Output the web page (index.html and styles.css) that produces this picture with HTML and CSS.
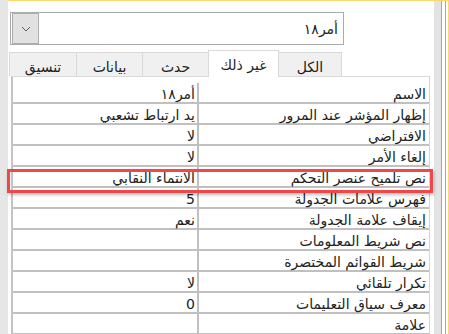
FILE: index.html
```html
<!DOCTYPE html>
<html lang="ar">
<head>
    <meta charset="UTF-8">
    <title>ورقة الخصائص</title>
    <link rel="stylesheet" href="styles.css">
</head>
<body>
    <div class="window">
        <div class="gutter"></div>
        <div class="frame">
            <div class="sheet" dir="rtl">
                <div class="combo">
                    <span class="combo-value">أمر١٨</span>
                    <div class="combo-drop">
                        <svg width="10" height="6" viewBox="0 0 10 6"><polyline points="1,1 5,5 9,1" fill="none" stroke="#606060" stroke-width="1"/></svg>
                    </div>
                </div>

                <div class="tabs">
                    <div class="tab tab-all">الكل</div>
                    <div class="tab tab-other active">غير ذلك</div>
                    <div class="tab tab-event">حدث</div>
                    <div class="tab tab-data">بيانات</div>
                    <div class="tab tab-format">تنسيق</div>
                </div>

                <div class="panel">
                    <table class="props">
                        <tr><td class="label">الاسم</td><td class="value">أمر١٨</td></tr>
                        <tr><td class="label">إظهار المؤشر عند المرور</td><td class="value">يد ارتباط تشعبي</td></tr>
                        <tr><td class="label">الافتراضي</td><td class="value">لا</td></tr>
                        <tr><td class="label">إلغاء الأمر</td><td class="value">لا</td></tr>
                        <tr><td class="label">نص تلميح عنصر التحكم</td><td class="value">الانتماء النقابي</td></tr>
                        <tr><td class="label">فهرس علامات الجدولة</td><td class="value">5</td></tr>
                        <tr><td class="label">إيقاف علامة الجدولة</td><td class="value">نعم</td></tr>
                        <tr><td class="label">نص شريط المعلومات</td><td class="value"></td></tr>
                        <tr><td class="label">شريط القوائم المختصرة</td><td class="value"></td></tr>
                        <tr><td class="label">تكرار تلقائي</td><td class="value">لا</td></tr>
                        <tr><td class="label">معرف سياق التعليمات</td><td class="value">0</td></tr>
                        <tr><td class="label">علامة</td><td class="value"></td></tr>
                    </table>
                </div>
            </div>
            <div class="rail"></div>
            <div class="edge"></div>
            <div class="edge-gap"></div>
            <div class="edge"></div>
            <div class="edge-gap narrow"></div>
        </div>
    </div>
    <div class="highlight"></div>
</body>
</html>
```

FILE: styles.css
```css
html, body {
    margin: 0;
    padding: 0;
}
body {
    width: 449px;
    height: 334px;
    overflow: hidden;
    position: relative;
    background-color: #ffffff;
    font-family: "DejaVu Sans", sans-serif;
    font-size: 14px;
    color: #222222;
}
.window {
    display: flex;
    height: 334px;
}
.gutter {
    width: 8px;
    background-color: #e6e6e6;
}
.frame {
    flex: 1;
    display: flex;
    border-top: 1px solid #fcd86c;
    border-right: 1px solid #fcd86c;
}
.sheet {
    width: 426px;
    display: flex;
    flex-direction: column;
}
.rail {
    width: 7px;
    background-color: #e3e3e3;
}
.edge {
    width: 1px;
    background-color: #a8a8a8;
}
.edge-gap {
    width: 3px;
}
.edge-gap.narrow {
    width: 2px;
}

/* combo box */
.combo {
    display: flex;
    align-items: center;
    box-sizing: border-box;
    height: 35px;
    margin: 11px 90px 0 2px;
    border: 1px solid #ababab;
}
.combo-value {
    padding-right: 5px;
    padding-top: 1px;
}
.combo-drop {
    margin-right: auto;
    margin-left: 1px;
    box-sizing: border-box;
    width: 27px;
    height: 31px;
    display: flex;
    align-items: center;
    justify-content: center;
    background-color: #e1e1e1;
    border: 1px solid #adadad;
}

/* tabs */
.tabs {
    display: flex;
    align-items: flex-end;
    height: 26px;
    margin: 5px 92px 0 0;
    position: relative;
    z-index: 1;
}
.tab {
    box-sizing: border-box;
    height: 24px;
    display: flex;
    align-items: center;
    justify-content: center;
    padding-top: 4px;
    background-color: #f0f0f0;
    border: 1px solid #d9d9d9;
    border-bottom: none;
    margin-left: -1px;
}
.tab.active {
    height: 27px;
    margin-bottom: -1px;
    background-color: #ffffff;
    position: relative;
    z-index: 2;
    padding-top: 2px;
}
.tab-all { width: 64px; }
.tab-other { width: 71px; }
.tab-event { width: 67px; }
.tab-data { width: 67px; }
.tab-format { width: 68px; }

/* property grid */
.panel {
    flex: 1;
    margin: 0 4px 0 3px;
    padding-top: 6px;
    border-top: 1px solid #d9d9d9;
    border-right: 1px solid #d4d4d4;
    border-left: 2px solid #c4c4c4;
}
.props {
    width: 100%;
    border-collapse: collapse;
}
.props td {
    height: 16px;
    padding: 3px 0 0 0;
    border-bottom: 2px solid #c0c0c0;
    white-space: nowrap;
    line-height: 16px;
}
.props .label {
    width: 227px;
    padding-right: 3px;
    border-left: 2px solid #c0c0c0;
}
.props .value {
    padding-right: 2px;
}

/* annotation */
.highlight {
    position: absolute;
    left: 7px;
    top: 169px;
    width: 420px;
    height: 18px;
    border: 3px solid #f04848;
    box-shadow: 1px 2px 3px rgba(0, 0, 0, 0.25);
}
```
